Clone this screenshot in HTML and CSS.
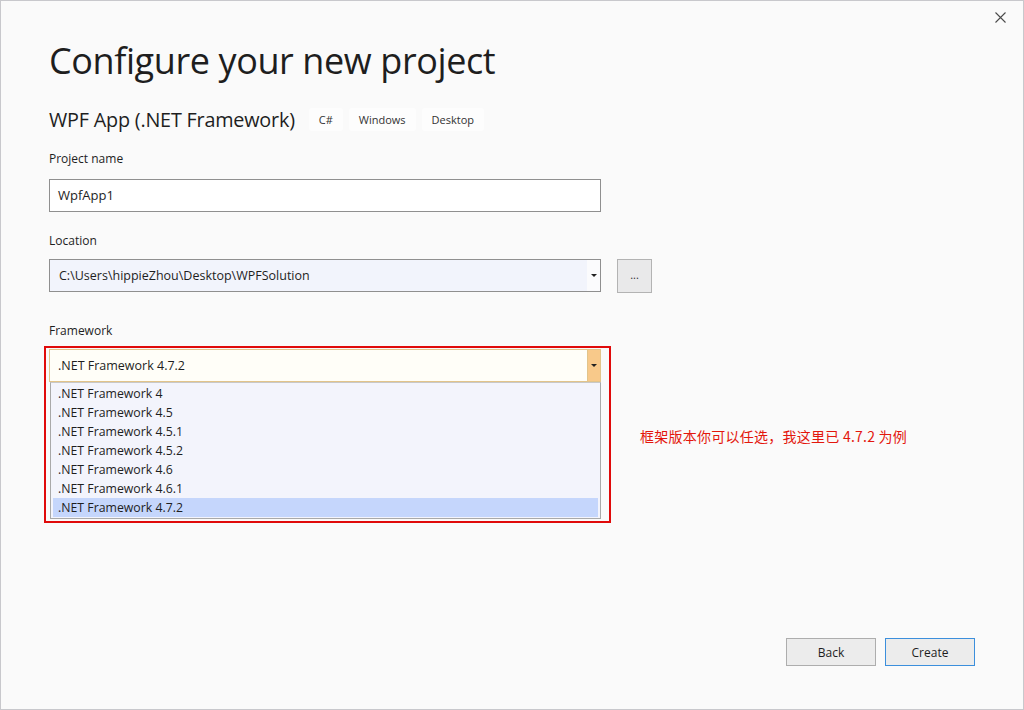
FILE: index.html
```html
<!DOCTYPE html>
<html lang="en">
<head>
<meta charset="utf-8">
<title>Configure your new project</title>
<link rel="stylesheet" href="styles.css">
</head>
<body>
<div class="window">
  <div class="topbar">
    <button class="close" aria-label="Close">
      <svg width="11" height="11" viewBox="0 0 11 11"><path d="M0.5 0.5 L10.5 10.5 M10.5 0.5 L0.5 10.5" stroke="#4a4a4a" stroke-width="1.1" fill="none"/></svg>
    </button>
  </div>
  <div class="content">
    <h1 class="title">Configure your new project</h1>
    <div class="subtitle-row">
      <span class="subtitle">WPF App (.NET Framework)</span>
      <span class="tag">C#</span>
      <span class="tag">Windows</span>
      <span class="tag">Desktop</span>
    </div>

    <div class="field field-name">
      <div class="label">Project name</div>
      <div class="textbox">WpfApp1</div>
    </div>

    <div class="field field-location">
      <div class="label">Location</div>
      <div class="location-row">
        <div class="combo combo-location">
          <span class="combo-text">C:\Users\hippieZhou\Desktop\WPFSolution</span>
          <span class="combo-arrow"><span class="tri"></span></span>
        </div>
        <button class="browse">...</button>
      </div>
    </div>

    <div class="field field-framework">
      <div class="label">Framework</div>
      <div class="framework-row">
        <div class="highlight">
          <div class="combo combo-framework">
            <span class="combo-text">.NET Framework 4.7.2</span>
            <span class="combo-arrow"><span class="tri"></span></span>
          </div>
          <ul class="list">
            <li>.NET Framework 4</li>
            <li>.NET Framework 4.5</li>
            <li>.NET Framework 4.5.1</li>
            <li>.NET Framework 4.5.2</li>
            <li>.NET Framework 4.6</li>
            <li>.NET Framework 4.6.1</li>
            <li class="selected">.NET Framework 4.7.2</li>
          </ul>
        </div>
        <div class="note">框架版本你可以任选，我这里已 4.7.2 为例</div>
      </div>
    </div>
  </div>
  <div class="footer">
    <button class="btn">Back</button>
    <button class="btn btn-primary">Create</button>
  </div>
</div>
</body>
</html>
```
FILE: styles.css
```css
* { box-sizing: border-box; }
html, body { margin: 0; padding: 0; }
body {
  font-family: "Open Sans", "Noto Sans", "Noto Sans CJK SC", sans-serif;
  color: #1e1e1e;
  background: #fafafa;
}
.window {
  width: 1024px;
  height: 710px;
  border: 1px solid #c8c8cc;
  background: #fafafa;
  display: flex;
  flex-direction: column;
}
.topbar {
  display: flex;
  justify-content: flex-end;
  height: 36px;
  padding: 11px 17px 0 0;
}
.close {
  border: 0;
  background: transparent;
  padding: 0;
  width: 11px;
  height: 11px;
  display: block;
}
.close svg { display: block; }
.content {
  padding-left: 48px;
}
.title {
  margin: 0;
  font-size: 36px;
  font-weight: 400;
  letter-spacing: -0.4px;
  line-height: 48px;
  color: #1e1e1e;
}
.subtitle-row {
  display: flex;
  align-items: center;
  margin-top: 22px;
  height: 24px;
}
.subtitle {
  font-size: 19.8px;
  letter-spacing: -0.2px;
  margin-right: 14px;
}
.tag {
  font-size: 11px;
  background: #fdfdfd;
  border-radius: 3px;
  padding: 3px 10px;
  margin-right: 6px;
  line-height: 17px;
  color: #333;
}
.label {
  font-size: 12px;
  line-height: 16px;
  color: #1e1e1e;
}
.field-name { margin-top: 20px; }
.field-location { margin-top: 21px; }
.field-framework { margin-top: 30px; }
.field-name .label { margin-bottom: 12px; }
.field-location .label { margin-bottom: 10px; }
.field-framework .label { margin-bottom: 7px; }
.textbox {
  width: 552px;
  height: 33px;
  border: 1px solid #8f8f8f;
  background: #ffffff;
  font-size: 13px;
  line-height: 31px;
  padding-left: 8px;
}
.location-row {
  display: flex;
  align-items: flex-start;
  gap: 16px;
}
.combo {
  display: flex;
  width: 552px;
  height: 33px;
  border: 1px solid #8f8f8f;
  font-size: 12.5px;
}
.combo-text {
  flex: 1;
  line-height: 31px;
  padding-left: 9px;
}
.combo-arrow {
  width: 13px;
  display: flex;
  align-items: center;
  justify-content: center;
}
.tri {
  width: 0;
  height: 0;
  border-left: 3px solid transparent;
  border-right: 3px solid transparent;
  border-top: 3px solid #222;
}
.combo-location { background: #f2f4fc; }
.combo-location .combo-arrow { background: #fbfbfd; }
.browse {
  width: 35px;
  height: 34px;
  border: 1px solid #b3b3b3;
  background: #e9e9ea;
  font-family: inherit;
  font-size: 11px;
  color: #333;
  padding: 0 0 4px;
}
.framework-row {
  display: flex;
  align-items: center;
  margin-left: -5px;
}
.highlight {
  width: 567px;
  border: 2px solid #e00a0a;
  padding: 1px 8px 2px 3px;
}
.combo-framework {
  width: 552px;
  background: #fffef8;
  border-color: #e2c48a;
}
.combo-framework .combo-arrow {
  background: #f8c98a;
  border-left: 1px solid #e2c48a;
}
.combo-framework .combo-text { padding-left: 8px; }
.list {
  list-style: none;
  margin: 0;
  padding: 1px 2px 1px 2px;
  width: 551px;
  margin-left: 1px;
  border: 1px solid #a9a9a9;
  border-top-color: #c8c8c8;
  background: #f3f4fc;
  font-size: 12.3px;
}
.list li {
  height: 19px;
  line-height: 19px;
  padding-left: 5px;
}
.list li.selected { background: #c5d6fc; }
.note {
  margin-left: 29px;
  margin-top: 2px;
  font-size: 14px;
  letter-spacing: 0.25px;
  color: #e3170d;
  font-family: "Noto Sans CJK SC", "Open Sans", sans-serif;
}
.footer {
  margin-top: auto;
  display: flex;
  justify-content: flex-end;
  gap: 9px;
  padding: 0 48px 43px 0;
}
.btn {
  width: 90px;
  height: 28px;
  border: 1px solid #adadad;
  background: #ececec;
  font-family: inherit;
  font-size: 12px;
  color: #1e1e1e;
  padding: 0;
}
.btn-primary { border-color: #3c8fdc; }
```
